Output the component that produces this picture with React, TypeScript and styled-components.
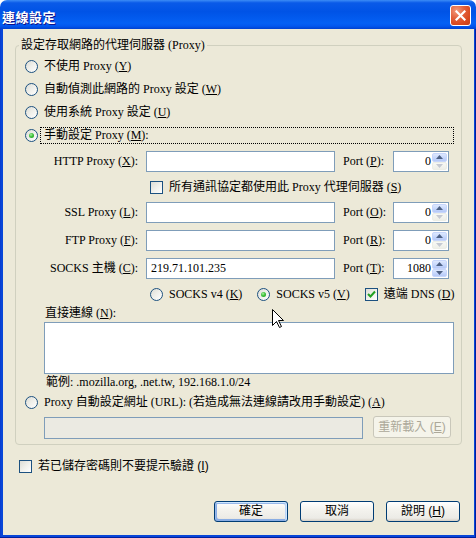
import React from "react";
import styled, { createGlobalStyle, css } from "styled-components";

const GlobalStyle = createGlobalStyle`
  html, body { margin: 0; padding: 0; background: #ffffff; }
  body { width: 476px; height: 538px; overflow: hidden; }
  * { box-sizing: border-box; }
`;

const UI_FONT = `"Liberation Serif", "Noto Sans CJK TC", serif`;
const SANS_FONT = `"Liberation Sans", "Noto Sans CJK TC", sans-serif`;

const Window = styled.div`
  position: relative;
  width: 476px;
  height: 538px;
  display: flex;
  flex-direction: column;
  font-family: ${UI_FONT};
  font-size: 12px;
  color: #000;
`;

const TitleBar = styled.div`
  height: 29px;
  flex: none;
  display: flex;
  align-items: center;
  justify-content: space-between;
  padding: 0 5px 0 2px;
  border-radius: 7px 7px 0 0;
  background: linear-gradient(
    180deg,
    #3c8cf6 0%,
    #0a5ae8 10%,
    #0053e6 40%,
    #0460f4 80%,
    #0257ef 90%,
    #0041cf 100%
  );
`;

const Title = styled.span`
  font-family: "Noto Sans CJK TC", sans-serif;
  font-weight: 700;
  font-size: 13px;
  line-height: 16px;
  margin-top: 4px;
  color: #fff;
  text-shadow: 1px 1px #0f1089;
  letter-spacing: 0.5px;
`;

const CloseButton = styled.div`
  width: 21px;
  height: 21px;
  border: 1px solid #fff;
  border-radius: 3px;
  background: radial-gradient(circle at 30% 25%, #f39a7c 0%, #e2603b 40%, #d9491f 70%, #c33d17 100%);
  display: flex;
  align-items: center;
  justify-content: center;
  margin-top: 1px;
`;

const Frame = styled.div`
  flex: 1;
  display: flex;
  padding: 0 4px 3px 3px;
  background: #0846d8;
  box-shadow: inset -1px -1px #001ea0, inset 1px 0 #0a3ed0;
`;

const Client = styled.div`
  flex: 1;
  background: #ece9d8;
  display: flex;
  flex-direction: column;
  padding: 9px 12px 13px 12px;
`;

const GroupBox = styled.fieldset`
  margin: 0;
  padding: 0;
  min-width: 0;
  border: 1px solid #d0d0bf;
  border-radius: 4px;
`;

const GroupLegend = styled.legend`
  margin-left: 3px;
  padding: 0 2px;
  line-height: 14px;
`;

const GroupInner = styled.div`
  display: flex;
  flex-direction: column;
  align-items: flex-start;
  padding: 3px 7px 6px 9px;
`;

const OptionRow = styled.div<{ $height?: number; $indent?: number; $top?: number }>`
  display: flex;
  align-items: center;
  align-self: stretch;
  height: ${(p) => p.$height ?? 23}px;
  margin-left: ${(p) => p.$indent ?? 0}px;
  margin-top: ${(p) => p.$top ?? 0}px;
`;

const RadioCircle = styled.span<{ $checked?: boolean }>`
  position: relative;
  flex: none;
  width: 13px;
  height: 13px;
  border-radius: 50%;
  border: 1px solid #1c5180;
  background: linear-gradient(135deg, #dcdcd5 0%, #eeeee9 45%, #ffffff 100%);
  ${(p) =>
    p.$checked &&
    css`
      &::after {
        content: "";
        position: absolute;
        left: 3px;
        top: 3px;
        width: 5px;
        height: 5px;
        border-radius: 50%;
        background: radial-gradient(circle at 40% 35%, #a8f0a2 0%, #3fc13b 45%, #17961b 100%);
      }
    `}
`;

const CheckBox = styled.span`
  flex: none;
  width: 13px;
  height: 13px;
  border: 1px solid #1c5180;
  background: linear-gradient(135deg, #dcdcd5 0%, #eeeee9 45%, #ffffff 100%);
  display: inline-flex;
  align-items: center;
  justify-content: center;
`;

const OptionLabel = styled.span<{ $focused?: boolean; $sans?: boolean }>`
  margin-left: 2px;
  padding: 0 3px;
  line-height: 15px;
  border: 1px dotted ${(p) => (p.$focused ? "#000" : "transparent")};
  white-space: nowrap;
  ${(p) => p.$focused && css`flex: 1;`}
  ${(p) => p.$sans && css`font-family: ${SANS_FONT};`}
`;

const Key = styled.u`
  text-decoration: underline;
  text-underline-offset: 1px;
`;

const ProxyGrid = styled.div`
  display: grid;
  grid-template-columns: 98px 189px 42px 56px;
  column-gap: 8px;
  row-gap: 7px;
  align-items: center;
  margin: 4px 0 0 15px;
`;

const FieldLabel = styled.span`
  text-align: right;
  white-space: nowrap;
  line-height: 21px;
`;

const PortLabel = styled.span`
  white-space: nowrap;
  line-height: 21px;
`;

const fieldBase = css`
  display: block;
  margin: 0;
  height: 21px;
  border: 1px solid #7f9db9;
  border-radius: 0;
  background: #fff;
  padding: 0 4px;
  font-family: ${UI_FONT};
  font-size: 12px;
  color: #000;
  outline: none;
`;

const TextField = styled.input<{ $width?: number; $disabled?: boolean }>`
  ${fieldBase}
  width: ${(p) => (p.$width ? `${p.$width}px` : "100%")};
  ${(p) => p.$disabled && css`background: #ebeae2;`}
`;

const Spinner = styled.div`
  height: 21px;
  border: 1px solid #7f9db9;
  background: #fff;
  display: flex;
  padding: 1px;
`;

const SpinValue = styled.span`
  flex: 1;
  text-align: right;
  line-height: 17px;
  padding-right: 1px;
`;

const SpinButtons = styled.div`
  width: 15px;
  display: flex;
  flex-direction: column;
  gap: 0;
`;

const SpinButton = styled.span<{ $disabled?: boolean }>`
  flex: 1;
  display: flex;
  align-items: center;
  justify-content: center;
  border-radius: 2px;
  border: 1px solid ${(p) => (p.$disabled ? "#eceee6" : "#c7d6fb")};
  background: ${(p) =>
    p.$disabled
      ? "linear-gradient(180deg, #f7f8f4 0%, #eeefe9 100%)"
      : "linear-gradient(180deg, #dde8fe 0%, #c4d5fb 60%, #b5c9f7 100%)"};
`;

const SpanAll = styled.div<{ $from: number; $pad?: number }>`
  grid-column: ${(p) => p.$from} / -1;
  display: flex;
  align-items: center;
  padding-left: ${(p) => p.$pad ?? 0}px;
`;

const InlineChoice = styled.span<{ $gapAfter?: number }>`
  display: flex;
  align-items: center;
  height: 16px;
  margin-right: ${(p) => p.$gapAfter ?? 0}px;
`;

const ChoiceText = styled.span`
  margin-left: 6px;
  line-height: 16px;
  white-space: nowrap;
`;

const PlainText = styled.div<{ $indent: number; $top?: number }>`
  margin-left: ${(p) => p.$indent}px;
  margin-top: ${(p) => p.$top ?? 0}px;
  line-height: 17px;
  white-space: nowrap;
`;

const ExceptionsBox = styled.textarea`
  display: block;
  margin: 0 0 0 19px;
  width: 410px;
  height: 52px;
  border: 1px solid #7f9db9;
  border-radius: 0;
  background: #fff;
  resize: none;
  outline: none;
  font-family: ${UI_FONT};
  font-size: 12px;
`;

const UrlRow = styled.div`
  display: flex;
  align-items: flex-start;
  gap: 10px;
  margin: 5px 0 0 19px;
  height: 22px;
`;

const UrlField = styled(TextField)`
  height: 22px;
  margin-top: 1px;
  background: #ebeae2;
`;

const Button = styled.button<{ $default?: boolean; $width?: number; $height?: number }>`
  width: ${(p) => p.$width ?? 74}px;
  height: ${(p) => p.$height ?? 21}px;
  margin: 0;
  padding: 0;
  border: 1px solid #003c74;
  border-radius: 3px;
  background: linear-gradient(180deg, #ffffff 0%, #f4f3ee 40%, #ecebe6 85%, #d6d0c5 100%);
  font-family: ${SANS_FONT};
  font-size: 12px;
  color: #000;
  line-height: 17px;
  ${(p) =>
    p.$default &&
    css`
      box-shadow: inset -1px 1px #cee7ff, inset 1px 2px #98b8ea, inset -2px 2px #bcd4f6,
        inset 1px -1px #89ade4, inset 2px -2px #89ade4;
    `}
  &:disabled {
    border-color: #c9c7ba;
    background: #f5f4ea;
    color: #aca899;
  }
`;

const BottomCheckRow = styled.div`
  display: flex;
  align-items: center;
  height: 17px;
  margin: 13px 0 0 4px;
`;

const ButtonRow = styled.div`
  margin-top: auto;
  display: flex;
  justify-content: flex-end;
  gap: 12px;
  padding-right: 2px;
`;

const Cursor = styled.svg`
  position: absolute;
  left: 272px;
  top: 309px;
  pointer-events: none;
`;

const CheckMark = () => (
  <svg width="9" height="9" viewBox="0 0 9 9">
    <path d="M1 4 L3.5 6.5 L8 1.5" fill="none" stroke="#21a121" strokeWidth="2" />
  </svg>
);

const Arrow = ({ up, disabled }: { up?: boolean; disabled?: boolean }) => (
  <svg width="7" height="4" viewBox="0 0 7 4">
    <path
      d={up ? "M0 4 L3.5 0 L7 4 Z" : "M0 0 L3.5 4 L7 0 Z"}
      fill={disabled ? "#c5c9d2" : "#4d6185"}
    />
  </svg>
);

const PortSpinner = ({ value }: { value: string }) => {
  const zero = value === "0";
  return (
    <Spinner>
      <SpinValue>{value}</SpinValue>
      <SpinButtons>
        <SpinButton>
          <Arrow up />
        </SpinButton>
        <SpinButton $disabled={zero}>
          <Arrow disabled={zero} />
        </SpinButton>
      </SpinButtons>
    </Spinner>
  );
};

const Radio = ({
  checked,
  focused,
  children,
  indent,
  height,
  top,
}: {
  checked?: boolean;
  focused?: boolean;
  children: React.ReactNode;
  indent?: number;
  height?: number;
  top?: number;
}) => (
  <OptionRow $indent={indent} $height={height} $top={top}>
    <RadioCircle $checked={checked} />
    <OptionLabel $focused={focused}>{children}</OptionLabel>
  </OptionRow>
);

const proxyRows = [
  { label: <>HTTP Proxy (<Key>X</Key>):</>, value: "", port: <>Port (<Key>P</Key>):</>, portValue: "0" },
  { label: <>SSL Proxy (<Key>L</Key>):</>, value: "", port: <>Port (<Key>O</Key>):</>, portValue: "0" },
  { label: <>FTP Proxy (<Key>F</Key>):</>, value: "", port: <>Port (<Key>R</Key>):</>, portValue: "0" },
  { label: <>SOCKS 主機 (<Key>C</Key>):</>, value: "219.71.101.235", port: <>Port (<Key>T</Key>):</>, portValue: "1080" },
];

const ProxyRow = ({ row }: { row: (typeof proxyRows)[number] }) => (
  <>
    <FieldLabel>{row.label}</FieldLabel>
    <TextField defaultValue={row.value} readOnly />
    <PortLabel>{row.port}</PortLabel>
    <PortSpinner value={row.portValue} />
  </>
);

export default function App() {
  return (
    <>
      <GlobalStyle />
      <Window>
        <TitleBar>
          <Title>連線設定</Title>
          <CloseButton>
            <svg width="11" height="11" viewBox="0 0 11 11">
              <path d="M1.5 1.5 L9.5 9.5 M9.5 1.5 L1.5 9.5" stroke="#fff" strokeWidth="2.2" strokeLinecap="square" />
            </svg>
          </CloseButton>
        </TitleBar>
        <Frame>
          <Client>
            <GroupBox>
              <GroupLegend>設定存取網路的代理伺服器 (Proxy)</GroupLegend>
              <GroupInner>
                <Radio>
                  不使用 Proxy (<Key>Y</Key>)
                </Radio>
                <Radio>
                  自動偵測此網路的 Proxy 設定 (<Key>W</Key>)
                </Radio>
                <Radio>
                  使用系統 Proxy 設定 (<Key>U</Key>)
                </Radio>
                <Radio checked focused>
                  手動設定 Proxy (<Key>M</Key>):
                </Radio>

                <ProxyGrid>
                  <ProxyRow row={proxyRows[0]} />
                  <SpanAll $from={2} $pad={4}>
                    <CheckBox />
                    <ChoiceText>
                      所有通訊協定都使用此 Proxy 代理伺服器 (<Key>S</Key>)
                    </ChoiceText>
                  </SpanAll>
                  <ProxyRow row={proxyRows[1]} />
                  <ProxyRow row={proxyRows[2]} />
                  <ProxyRow row={proxyRows[3]} />
                  <SpanAll $from={2} $pad={4}>
                    <InlineChoice $gapAfter={15}>
                      <RadioCircle />
                      <ChoiceText>
                        SOCKS v4 (<Key>K</Key>)
                      </ChoiceText>
                    </InlineChoice>
                    <InlineChoice $gapAfter={15}>
                      <RadioCircle $checked />
                      <ChoiceText>
                        SOCKS v5 (<Key>V</Key>)
                      </ChoiceText>
                    </InlineChoice>
                    <InlineChoice>
                      <CheckBox>
                        <CheckMark />
                      </CheckBox>
                      <ChoiceText>
                        遠端 DNS (<Key>D</Key>)
                      </ChoiceText>
                    </InlineChoice>
                  </SpanAll>
                </ProxyGrid>

                <PlainText $indent={20} $top={3}>
                  直接連線 (<Key>N</Key>):
                </PlainText>
                <ExceptionsBox readOnly />
                <PlainText $indent={21}>範例: .mozilla.org, .net.tw, 192.168.1.0/24</PlainText>

                <Radio height={17} top={3}>
                  Proxy 自動設定網址 (URL): (若造成無法連線請改用手動設定) (<Key>A</Key>)
                </Radio>
                <UrlRow>
                  <UrlField $width={319} readOnly disabled />
                  <Button $width={78} $height={22} disabled>
                    重新載入 (<Key>E</Key>)
                  </Button>
                </UrlRow>
              </GroupInner>
            </GroupBox>

            <BottomCheckRow>
              <CheckBox />
              <OptionLabel $sans>
                若已儲存密碼則不要提示驗證 (<Key>I</Key>)
              </OptionLabel>
            </BottomCheckRow>

            <ButtonRow>
              <Button $default>確定</Button>
              <Button>取消</Button>
              <Button>
                說明 (<Key>H</Key>)
              </Button>
            </ButtonRow>
          </Client>
        </Frame>
        <Cursor width="13" height="20" viewBox="0 0 13 20">
          <path
            d="M0.5 0.5 L0.5 16.5 L4.5 12.5 L7.5 18.5 L9.5 17.5 L6.5 11.5 L11.5 11.5 Z"
            fill="#fff"
            stroke="#000"
            strokeWidth="1"
          />
        </Cursor>
      </Window>
    </>
  );
}
